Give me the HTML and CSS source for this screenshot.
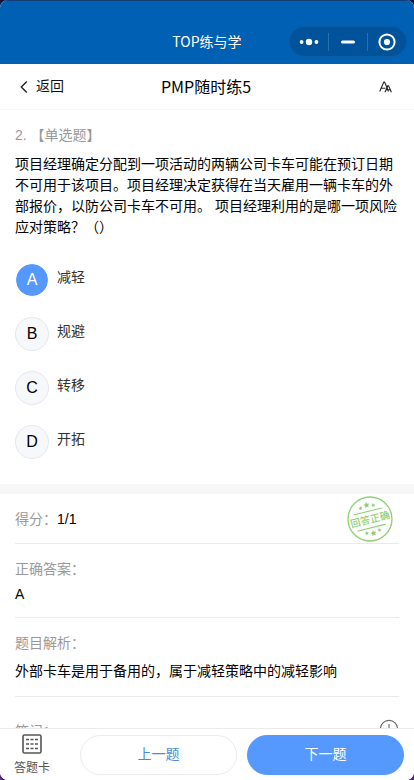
FILE: index.html
```html
<!DOCTYPE html>
<html lang="zh-CN">
<head>
<meta charset="utf-8">
<meta name="viewport" content="width=device-width, initial-scale=1">
<title>TOP练与学</title>
<link rel="stylesheet" href="styles.css">
</head>
<body>
<div class="app">
  <header class="titlebar">
    <h1 class="titlebar-name">TOP练与学</h1>
    <div class="capsule">
      <button class="capsule-btn" type="button" aria-label="更多">
        <svg width="20" height="10" viewBox="0 0 20 10" fill="#fff"><circle cx="2.6" cy="5" r="1.9"/><circle cx="10" cy="5" r="3.2"/><circle cx="17.4" cy="5" r="1.9"/></svg>
      </button>
      <button class="capsule-btn" type="button" aria-label="最小化">
        <svg width="14" height="4" viewBox="0 0 14 4"><rect y="0.5" width="14" height="3" rx="1.5" fill="#fff"/></svg>
      </button>
      <button class="capsule-btn" type="button" aria-label="关闭">
        <svg width="18" height="18" viewBox="0 0 18 18"><circle cx="9" cy="9" r="7.6" fill="none" stroke="#fff" stroke-width="2"/><circle cx="9" cy="9" r="3.1" fill="#fff"/></svg>
      </button>
    </div>
  </header>

  <nav class="nav">
    <a class="back" href="#">
      <svg width="8" height="12" viewBox="0 0 8 12" fill="none" stroke="#222" stroke-width="1.4"><path d="M6.8 0.5 1.3 6l5.5 5.5"/></svg>
      返回
    </a>
    <h2 class="nav-title">PMP随时练5</h2>
    <button class="font-size" type="button" aria-label="字体大小">
      <svg width="13" height="12" viewBox="0 0 13 12" fill="none" stroke="#222" stroke-width="1.1"><path d="M0.7 10.5 4.8 1h.8l3.9 9.5M2.2 7.3h4.2"/><path d="M6 11.2 8.8 4.8h.8l2.8 6.4M7.1 8.8h4.2"/></svg>
    </button>
  </nav>

  <main class="content">
    <section class="question">
      <p class="label">2. 【单选题】</p>
      <p class="stem">项目经理确定分配到一项活动的两辆公司卡车可能在预订日期不可用于该项目。项目经理决定获得在当天雇用一辆卡车的外部报价，以防公司卡车不可用。 项目经理利用的是哪一项风险应对策略？（）</p>
      <div class="options">
        <button class="option selected" type="button"><span class="letter">A</span><span class="option-text">减轻</span></button>
        <button class="option" type="button"><span class="letter">B</span><span class="option-text">规避</span></button>
        <button class="option" type="button"><span class="letter">C</span><span class="option-text">转移</span></button>
        <button class="option" type="button"><span class="letter">D</span><span class="option-text">开拓</span></button>
      </div>
    </section>

    <section class="result">
      <div class="row score">
        <p><span class="label">得分：</span>1/1</p>
        <svg class="stamp" width="46" height="46" viewBox="0 0 46 46" role="img" aria-label="回答正确">
          <circle cx="23" cy="23" r="22" fill="none" stroke="#8fcf75" stroke-width="1.3"/>
          <g transform="rotate(-14 23 23)">
            <path d="M8 15.2h29M8 31.8h29" stroke="#8fcf75" stroke-width="1.1"/>
            <g fill="#8fcf75">
              <path d="M23 5.5l.9 1.9 2.1.3-1.5 1.5.3 2.1-1.8-1-1.8 1 .3-2.1L20 7.7l2.1-.3z"/>
              <path d="M16.5 8.2l.6 1.3 1.4.2-1 1 .2 1.4-1.2-.7-1.2.7.2-1.4-1-1 1.4-.2z"/>
              <path d="M29.5 8.2l.6 1.3 1.4.2-1 1 .2 1.4-1.2-.7-1.2.7.2-1.4-1-1 1.4-.2z"/>
              <path d="M23 34.5l.9 1.9 2.1.3-1.5 1.5.3 2.1-1.8-1-1.8 1 .3-2.1-1.5-1.5 2.1-.3z"/>
              <path d="M16.5 33.8l.6 1.3 1.4.2-1 1 .2 1.4-1.2-.7-1.2.7.2-1.4-1-1 1.4-.2z"/>
              <path d="M29.5 33.8l.6 1.3 1.4.2-1 1 .2 1.4-1.2-.7-1.2.7.2-1.4-1-1 1.4-.2z"/>
            </g>
            <text class="stamp-text" x="23" y="27" text-anchor="middle">回答正确</text>
          </g>
        </svg>
      </div>
      <div class="row">
        <p class="label">正确答案：</p>
        <p class="value">A</p>
      </div>
      <div class="row">
        <p class="label">题目解析：</p>
        <p class="value analysis">外部卡车是用于备用的，属于减轻策略中的减轻影响</p>
      </div>
      <div class="row notes">
        <p class="label">笔记：</p>
        <button class="add" type="button" aria-label="添加笔记">
          <svg width="20" height="20" viewBox="0 0 20 20" fill="none" stroke="#666" stroke-width="1.1"><circle cx="10" cy="10" r="8.6"/><path d="M10 5v10M5 10h10"/></svg>
        </button>
      </div>
    </section>
  </main>

  <footer class="footer">
    <button class="card" type="button">
      <svg width="20" height="20" viewBox="0 0 20 20" fill="none" stroke="#555"><rect x="1" y="1" width="18" height="18" rx="1.5" stroke-width="1.6"/><path d="M4 5.5h3m1.5 0h3m1.5 0h3M4 10h3m1.5 0h3m1.5 0h3M4 14.5h3m1.5 0h3m1.5 0h3" stroke-width="1.4"/></svg>
      答题卡
    </button>
    <button class="pill" type="button">上一题</button>
    <button class="pill primary" type="button">下一题</button>
  </footer>
</div>
</body>
</html>
```

FILE: styles.css
```css
* {
  box-sizing: border-box;
}

body {
  margin: 0;
  background: linear-gradient(#12143a 50%, #5b2585 50%);
  font-family: "Liberation Sans", "Noto Sans CJK SC", sans-serif;
  font-size: 14px;
  line-height: 21px;
  color: #000;
  text-spacing-trim: space-all;
}

h1,
h2,
p {
  margin: 0;
  font-weight: 400;
}

button {
  padding: 0;
  border: 0;
  background: none;
  font: inherit;
  color: inherit;
}

svg {
  display: block;
}

.app {
  display: flex;
  flex-direction: column;
  height: 100vh;
  overflow: hidden;
  border-radius: 8px;
  background: #fff;
}

.titlebar {
  display: grid;
  grid-template-columns: 1fr auto 1fr;
  align-items: center;
  flex: none;
  height: 64px;
  padding: 18px 7px 0;
  border-top: 1px solid #153f74;
  background: #0060b3;
  color: #fff;
}

.titlebar-name {
  grid-column: 2;
  font-family: "Noto Sans CJK SC", sans-serif;
  font-size: 14px;
}

.capsule {
  display: flex;
  align-items: center;
  justify-self: end;
  width: 118px;
  height: 31px;
  border: 1px solid #0c5ca2;
  border-radius: 16px;
  background: #00529a;
}

.capsule-btn {
  display: flex;
  flex: 1;
  align-items: center;
  justify-content: center;
  height: 18px;
}

.capsule-btn + .capsule-btn {
  border-left: 1px solid #2a70ad;
}

.nav {
  display: grid;
  grid-template-columns: 1fr auto 1fr;
  align-items: center;
  flex: none;
  height: 46px;
  padding: 0 22px 0 20px;
  border-bottom: 1px solid #f5f5f5;
}

.back {
  display: flex;
  align-items: center;
  gap: 8px;
  color: #111;
  text-decoration: none;
}

.nav-title {
  font-family: "Noto Sans CJK SC", sans-serif;
  font-size: 16px;
}

.font-size {
  justify-self: end;
}

.content {
  flex: 1;
  min-height: 0;
  overflow: hidden;
}

.question {
  padding: 15px 15px 25px;
  border-bottom: 10px solid #f7f7f7;
}

.label {
  color: #999;
}

.stem {
  margin-top: 8px;
}

.options {
  display: flex;
  flex-direction: column;
  gap: 20px;
  margin-top: 25px;
}

.option {
  display: flex;
  align-items: flex-start;
  gap: 8px;
  color: #333;
  text-align: left;
}

.option-text {
  padding-top: 4px;
}

.letter {
  flex: none;
  width: 34px;
  height: 34px;
  border: 1px solid #e4e7ea;
  border-radius: 50%;
  background: #f7f8fb;
  color: #000;
  font-size: 16px;
  line-height: 32px;
  text-align: center;
}

.selected .letter {
  border-color: #fff;
  background: #5599ff;
  background-clip: padding-box;
  color: #fff;
}

.result {
  padding: 0 15px;
}

.row {
  padding: 15px 0 12px;
  border-bottom: 1px solid #ebebeb;
}

.score {
  display: flex;
  align-items: center;
  justify-content: space-between;
  height: 50px;
  padding: 1px 6px 0 0;
}

.stamp-text {
  fill: #8fcf75;
  font-family: "Noto Sans CJK SC", sans-serif;
  font-size: 10px;
  font-weight: 500;
}

.value {
  margin-top: 4px;
}

.analysis {
  line-height: 26px;
}

.notes {
  display: flex;
  align-items: flex-end;
  justify-content: space-between;
  padding-top: 22px;
}

.notes .label {
  line-height: 16px;
}

.footer {
  display: flex;
  align-items: center;
  gap: 10px;
  flex: none;
  height: 52px;
  padding: 0 10px 0 0;
  border-top: 1px solid #ebebeb;
  background: #fff;
}

.card {
  display: flex;
  flex-direction: column;
  align-items: center;
  gap: 4px;
  width: 70px;
  padding: 2px 11px 0 5px;
  color: #555;
  font-size: 12px;
  line-height: 20px;
}

.pill {
  flex: 1;
  height: 40px;
  border: 1px solid #ebebeb;
  border-radius: 20px;
  color: #4a8be0;
}

.primary {
  border-color: #5599ff;
  background: #5599ff;
  color: #fff;
}
```
